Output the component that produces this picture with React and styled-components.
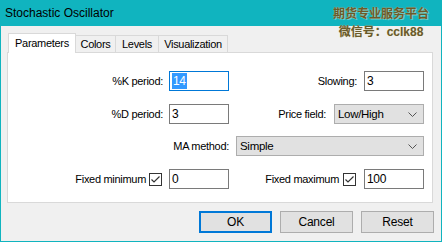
import React from "react"
import styled, { createGlobalStyle } from "styled-components"

const GlobalStyle = createGlobalStyle`
  html, body {
    margin: 0;
    padding: 0;
    background: #f0f0f0;
  }
`

const Window = styled.div`
  position: relative;
  width: 442px;
  height: 242px;
  box-sizing: border-box;
  border: 1px solid #10b4bf;
  border-top: none;
  background: #f0f0f0;
  font-family: "Liberation Sans", Arial, sans-serif;
  font-size: 11px;
  letter-spacing: -0.3px;
  color: #000;
  overflow: hidden;
`

const TitleBar = styled.div`
  height: 26px;
  margin: 0 -1px;
  padding-left: 5px;
  background: #10b4bf;
  font-size: 12px;
  letter-spacing: 0;
  line-height: 26px;
  color: #000;
`

const Watermark = styled.div`
  position: absolute;
  top: 5px;
  left: 329px;
  width: 102px;
  text-align: center;
  font-family: "Liberation Sans", "Noto Sans CJK SC", sans-serif;
  font-weight: bold;
  font-size: 12px;
  letter-spacing: 0;
  line-height: 18px;
  color: #6a5a2a;
  text-shadow: 0 0 1px #d8d2b0, 1px 1px 0 rgba(255, 255, 240, 0.35);
`

const Tabs = styled.div`
  display: flex;
  align-items: flex-end;
  height: 19px;
  margin-top: 7px;
  padding-left: 7px;
  position: relative;
  z-index: 1;
`

const Tab = styled.div`
  box-sizing: border-box;
  width: ${p => p.$w}px;
  height: ${p => (p.$active ? 20 : 17)}px;
  margin-bottom: ${p => (p.$active ? -1 : 0)}px;
  margin-left: ${p => (p.$first ? 0 : -1)}px;
  border: 1px solid #d9d9d9;
  border-bottom: none;
  background: ${p => (p.$active ? "#fff" : "#f0f0f0")};
  text-align: center;
  line-height: ${p => (p.$active ? 18 : 17)}px;
  font-size: 11px;
  position: relative;
  z-index: ${p => (p.$active ? 2 : 1)};
`

const Panel = styled.div`
  box-sizing: border-box;
  margin: 0 8px 0 6px;
  height: 151px;
  border: 1px solid #d9d9d9;
  background: #fff;
  padding: 18px 8px 0 0;
`

const Row = styled.div`
  display: grid;
  grid-template-columns: 221px 1fr;
  height: 20px;
  margin-bottom: ${p => p.$mb}px;
`

const WideRow = styled.div`
  display: flex;
  justify-content: flex-end;
  align-items: center;
  height: 20px;
  margin-bottom: 13px;
`

const Cell = styled.div`
  display: flex;
  justify-content: flex-end;
  align-items: center;
`

const Label = styled.span`
  margin-right: ${p => p.$gap || 6}px;
  white-space: nowrap;
`

const Input = styled.div`
  box-sizing: border-box;
  width: 60px;
  height: 20px;
  border: 1px solid ${p => (p.$focus ? "#0078d7" : "#7a7a7a")};
  background: #fff;
  padding: 1px 0 0 2px;
  line-height: 16px;
  font-size: 12px;
`

const Selected = styled.span`
  display: inline-block;
  background: #3399ff;
  color: #fff;
  padding: 0 1px;
`

const Select = styled.div`
  box-sizing: border-box;
  width: ${p => p.$w}px;
  height: 20px;
  border: 1px solid #adadad;
  background: #e1e1e1;
  display: flex;
  align-items: center;
  justify-content: space-between;
  padding: 0 6px 0 3px;
  font-size: 11.5px;
`

const Check = styled.span`
  box-sizing: border-box;
  width: 13px;
  height: 13px;
  border: 1px solid #333;
  background: #fff;
  display: flex;
  align-items: center;
  justify-content: center;
  margin-right: ${p => p.$gap}px;
`

const Buttons = styled.div`
  display: flex;
  justify-content: flex-end;
  gap: 8px;
  margin-top: 8px;
  padding-right: 7px;
`

const Button = styled.div`
  box-sizing: border-box;
  width: 73px;
  height: 22px;
  border: ${p => (p.$primary ? "2px solid #0078d7" : "1px solid #adadad")};
  background: #e1e1e1;
  display: flex;
  align-items: center;
  justify-content: center;
  font-size: 12px;
  letter-spacing: -0.2px;
`

const Chevron = () => (
  <svg width="9" height="5" viewBox="0 0 9 5">
    <path d="M0.5 0.5 L4.5 4.5 L8.5 0.5" fill="none" stroke="#555" strokeWidth="1" />
  </svg>
)

const Tick = () => (
  <svg width="11" height="11" viewBox="0 0 11 11">
    <path d="M1.5 5.5 L4 8 L9.5 2.5" fill="none" stroke="#333" strokeWidth="1.2" />
  </svg>
)

const App = () => {
  return (
    <>
      <GlobalStyle />
      <Window>
        <TitleBar>Stochastic Oscillator</TitleBar>
        <Watermark>
          <div>期货专业服务平台</div>
          <div>微信号：cclk88</div>
        </Watermark>
        <Tabs>
          <Tab $w={68} $active $first>Parameters</Tab>
          <Tab $w={41}>Colors</Tab>
          <Tab $w={44}>Levels</Tab>
          <Tab $w={70}>Visualization</Tab>
        </Tabs>
        <Panel>
          <Row $mb={13}>
            <Cell>
              <Label>%K period:</Label>
              <Input $focus><Selected>14</Selected></Input>
            </Cell>
            <Cell>
              <Label $gap={7}>Slowing:</Label>
              <Input>3</Input>
            </Cell>
          </Row>
          <Row $mb={12}>
            <Cell>
              <Label>%D period:</Label>
              <Input>3</Input>
            </Cell>
            <Cell>
              <Label $gap={8}>Price field:</Label>
              <Select $w={90}>
                <span>Low/High</span>
                <Chevron />
              </Select>
            </Cell>
          </Row>
          <WideRow>
            <Label $gap={7}>MA method:</Label>
            <Select $w={188}>
              <span>Simple</span>
              <Chevron />
            </Select>
          </WideRow>
          <Row $mb={0}>
            <Cell>
              <Label $gap={3}>Fixed minimum</Label>
              <Check $gap={7}><Tick /></Check>
              <Input>0</Input>
            </Cell>
            <Cell>
              <Label $gap={4}>Fixed maximum</Label>
              <Check $gap={8}><Tick /></Check>
              <Input>100</Input>
            </Cell>
          </Row>
        </Panel>
        <Buttons>
          <Button $primary>OK</Button>
          <Button>Cancel</Button>
          <Button>Reset</Button>
        </Buttons>
      </Window>
    </>
  )
}

export default App
